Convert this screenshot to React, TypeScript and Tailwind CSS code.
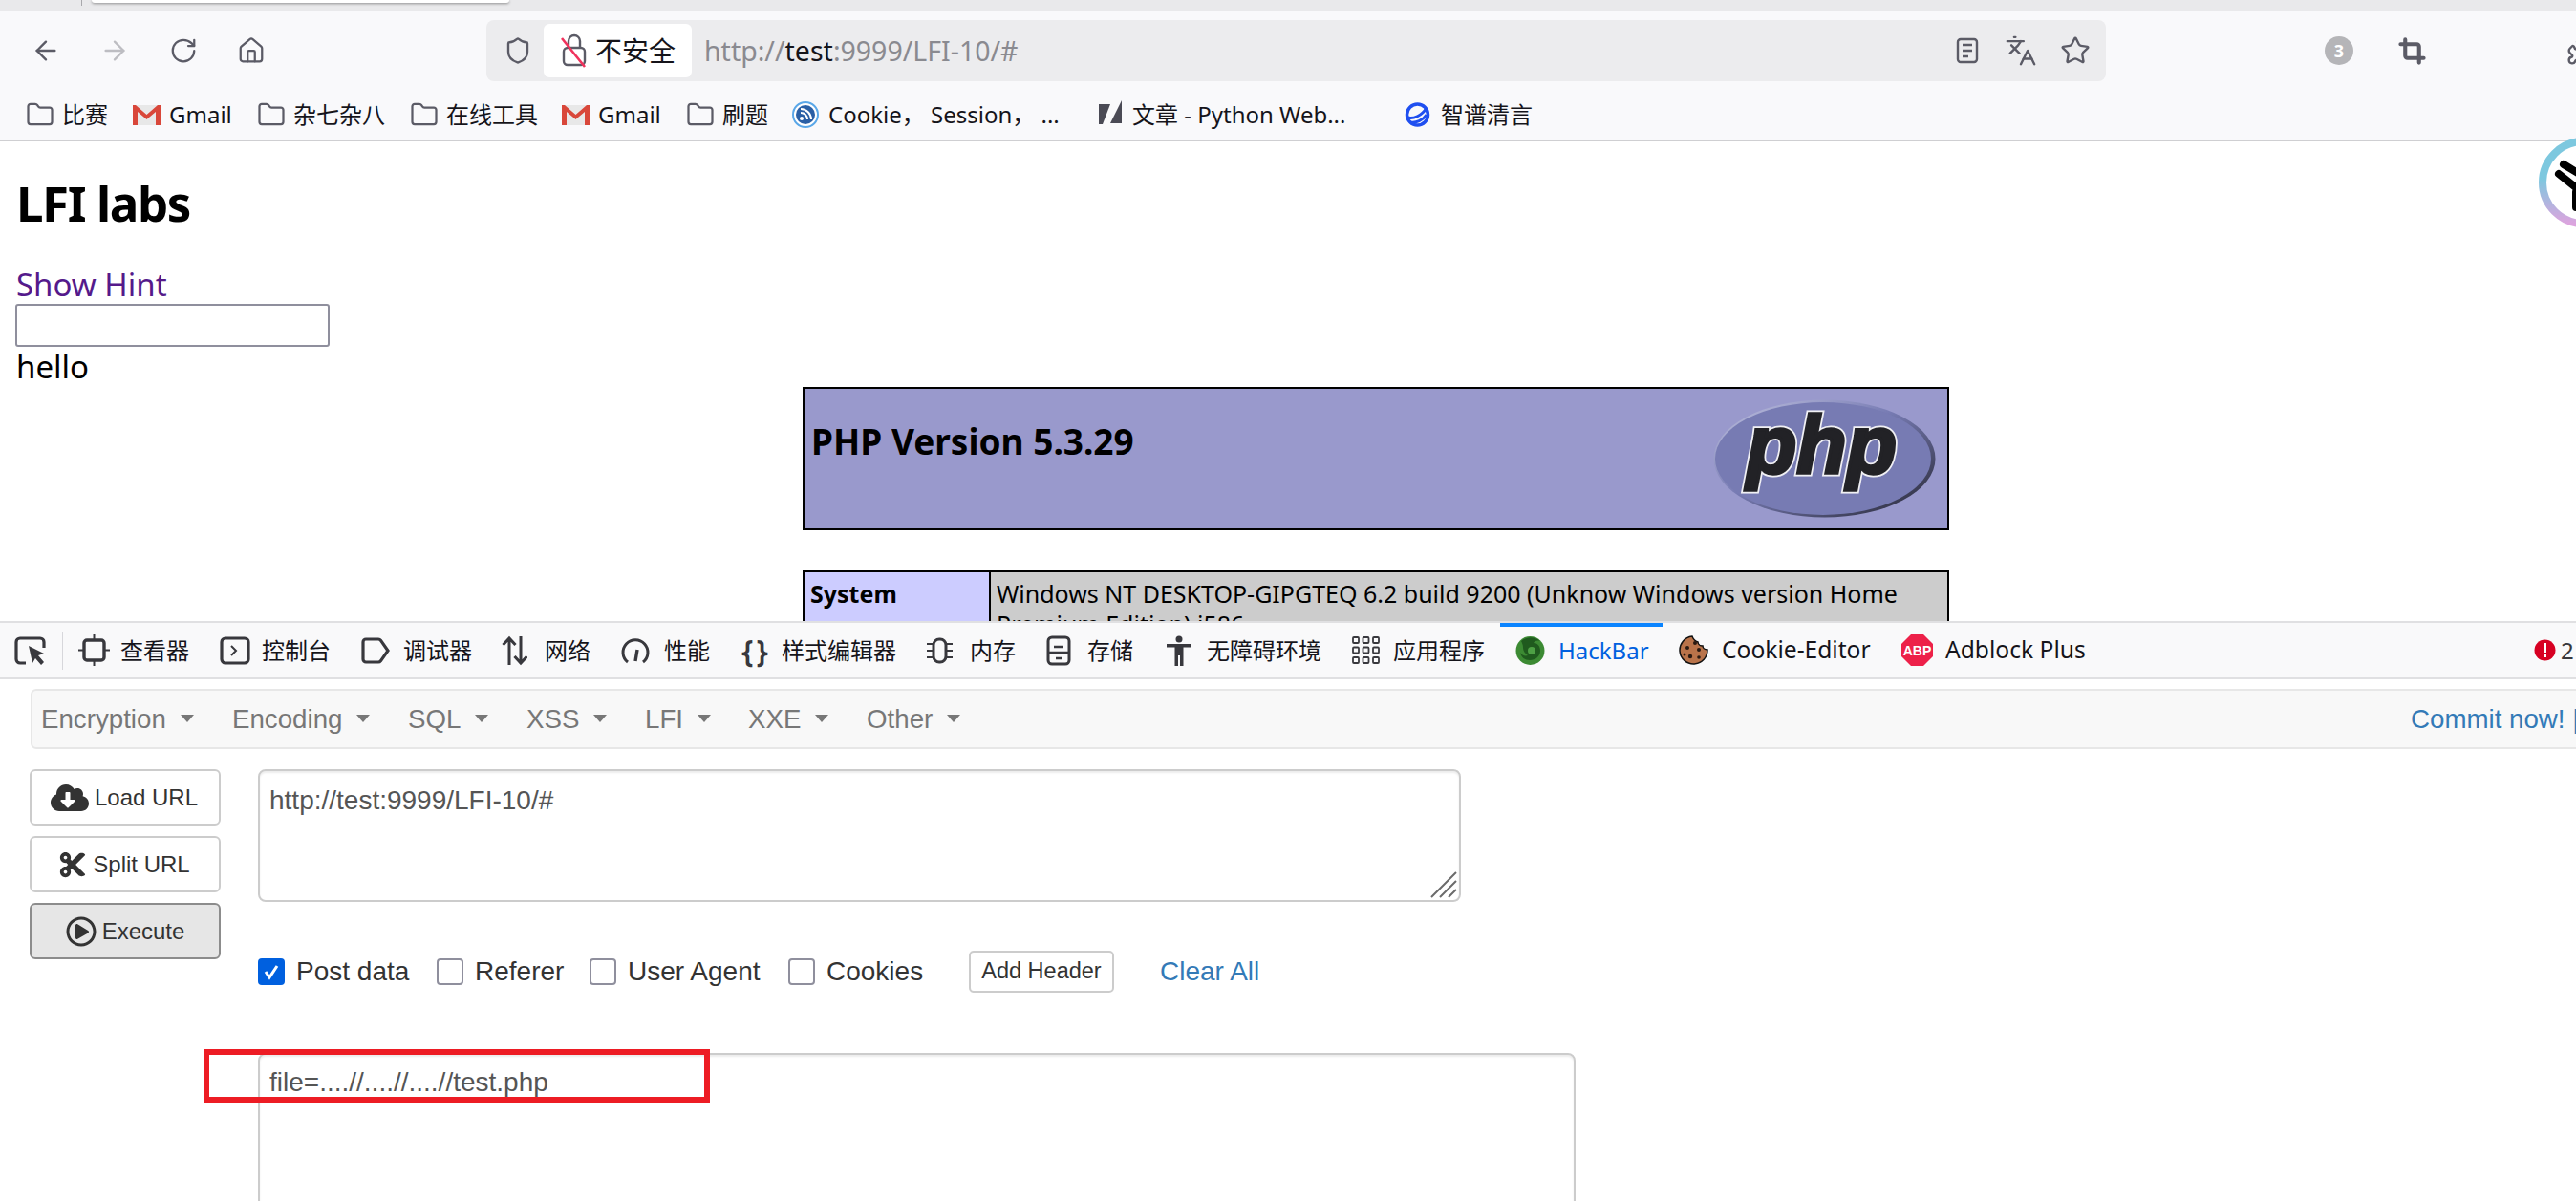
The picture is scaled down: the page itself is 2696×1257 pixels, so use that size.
import type { ReactNode } from "react";
import { ArrowLeft, ArrowRight, RotateCw, House, Shield, Star, Languages, Puzzle, Crop, Folder } from "lucide-react";
import { FaCloudDownloadAlt, FaCut, FaRegPlayCircle } from "react-icons/fa";

// ─── Small drawings ───────────────────────────────────────

function GmailIcon() {
  return (
    <svg width="31" height="24" viewBox="0 0 31 24" className="shrink-0">
      <rect x="1" y="2" width="29" height="21" fill="#e8e8e8" />
      <path d="M1 23V2h3l11.5 10L27 2h3v21h-5V9l-9.5 8L6 9v14z" fill="#d9473a" />
    </svg>
  );
}

function RssIcon() {
  return (
    <svg width="28" height="32" viewBox="0 0 28 32" className="shrink-0">
      <circle cx="14" cy="16" r="13" fill="#fff" stroke="#5aa7e8" strokeWidth="2" />
      <circle cx="14" cy="16" r="10" fill="#2a5fa5" />
      <circle cx="10" cy="20" r="2" fill="#fff" />
      <path d="M9 14a7 7 0 0 1 7 7M9 10a11 11 0 0 1 11 11" fill="none" stroke="#fff" strokeWidth="2" />
    </svg>
  );
}

function ArticleIcon() {
  return (
    <svg width="26" height="32" viewBox="0 0 26 32" className="shrink-0">
      <path d="M1 5h12L5 26H1z" fill="#4a4a55" />
      <path d="M25 1v24H13z" fill="#4a4a55" />
    </svg>
  );
}

function ZhipuIcon() {
  return (
    <svg width="27" height="26" viewBox="0 0 27 26" className="shrink-0">
      <circle cx="13.5" cy="13" r="11" fill="none" stroke="#1f4ff0" strokeWidth="3.5" />
      <path d="M3 16c6 2 15-2 20-10M6 21c6 1 13-2 17-8" fill="none" stroke="#1f4ff0" strokeWidth="3" />
    </svg>
  );
}

function SlashedLock() {
  return (
    <svg width="30" height="36" viewBox="0 0 30 36" fill="none" className="shrink-0">
      <path d="M9 15V8a6 6 0 0 1 12 0v7" stroke="#5b5b66" strokeWidth="2.4" />
      <rect x="4" y="15" width="22" height="18" rx="4" stroke="#5b5b66" strokeWidth="2.4" />
      <path d="M2 5l24 30" stroke="#f0325c" strokeWidth="2.6" />
    </svg>
  );
}

function ReaderIcon() {
  return (
    <svg width="24" height="28" viewBox="0 0 24 28" fill="none" className="shrink-0">
      <rect x="2" y="2" width="20" height="24" rx="3" stroke="#5b5b66" strokeWidth="2.4" />
      <path d="M7 8h10M7 14h10M7 20h6" stroke="#5b5b66" strokeWidth="2.4" />
    </svg>
  );
}

function PhpLogo() {
  const word = {
    x: 35,
    y: 77,
    textLength: 157,
    lengthAdjust: "spacingAndGlyphs" as const,
    fontFamily: "Liberation Sans, sans-serif",
    fontWeight: 700,
    fontStyle: "italic",
    fontSize: 86,
  };
  return (
    <svg width="233" height="124" viewBox="0 0 233 124" className="shrink-0">
      <defs>
        <linearGradient id="phpEdge" x1="0" y1="0" x2="1" y2="1">
          <stop offset="0" stopColor="#c4c6e2" />
          <stop offset="0.45" stopColor="#777bb3" />
          <stop offset="1" stopColor="#23232e" />
        </linearGradient>
      </defs>
      <ellipse cx="116.5" cy="62" rx="116" ry="61.5" fill="url(#phpEdge)" />
      <ellipse cx="115" cy="62" rx="113" ry="59" fill="#777bb3" />
      {/* white halo first, the heavy dark word on top */}
      <text {...word} fill="#f0f0f4" stroke="#f0f0f4" strokeWidth="7">
        php
      </text>
      <text {...word} fill="#222226" stroke="#222226" strokeWidth="3.5">
        php
      </text>
    </svg>
  );
}

function InspectorIcon() {
  return (
    <svg width="33" height="33" viewBox="0 0 33 33" fill="none" stroke="#38383d">
      <rect x="6" y="6" width="21" height="21" rx="3" strokeWidth="3.4" />
      <path d="M16.5 0v6M16.5 27v6M0 16.5h6M27 16.5h6" strokeWidth="2" />
    </svg>
  );
}

function ConsoleIcon() {
  return (
    <svg width="32" height="30" viewBox="0 0 32 30" fill="none" stroke="#38383d">
      <rect x="2" y="2" width="28" height="26" rx="4" strokeWidth="3.2" />
      <path d="M12 10l5 5-5 5" strokeWidth="2" />
    </svg>
  );
}

function DebuggerIcon() {
  return (
    <svg width="30" height="28" viewBox="0 0 30 28" fill="none" stroke="#38383d">
      <path d="M5 2h13a3 3 0 0 1 2.4 1.2L28 14l-7.6 10.8A3 3 0 0 1 18 26H5a3 3 0 0 1-3-3V5a3 3 0 0 1 3-3z" strokeWidth="3.2" />
    </svg>
  );
}

function NetworkIcon() {
  return (
    <svg width="27" height="32" viewBox="0 0 27 32" fill="none" stroke="#38383d" strokeWidth="3">
      <path d="M8 31V3M1.5 10L8 3l6.500 7" />
      <path d="M20 1v28M13.500 22l6.500 7 6.500-7" />
    </svg>
  );
}

function PerformanceIcon() {
  return (
    <svg width="30" height="30" viewBox="0 0 30 30" fill="none" stroke="#38383d">
      <path d="M7 27A13 13 0 1 1 23 27" strokeWidth="3" />
      <path d="M15 26l2-12" strokeWidth="3.400" />
    </svg>
  );
}

function MemoryIcon() {
  return (
    <svg width="27" height="30" viewBox="0 0 27 30" fill="none" stroke="#38383d">
      <rect x="7" y="3" width="13" height="24" rx="6" strokeWidth="3" />
      <path d="M0 8h6M0 15h6M0 22h6M21 8h6M21 15h6M21 22h6" strokeWidth="2" />
    </svg>
  );
}

function StorageIcon() {
  return (
    <svg width="26" height="32" viewBox="0 0 26 32" fill="none" stroke="#38383d">
      <rect x="2" y="2" width="22" height="28" rx="4" strokeWidth="3" />
      <path d="M8 12h10M2 18h22M10 24h6" strokeWidth="2.600" />
    </svg>
  );
}

function AccessibilityIcon() {
  return (
    <svg width="28" height="32" viewBox="0 0 28 32" fill="#38383d">
      <circle cx="14" cy="4" r="3.500" />
      <path d="M1 9h26v3.500h-8.500V32h-3.500v-11h-2v11H9.500V12.500H1z" />
    </svg>
  );
}

function AppsIcon() {
  const cells = [0, 1, 2, 3, 4, 5, 6, 7, 8];
  return (
    <svg width="29" height="29" viewBox="0 0 29 29" fill="none" stroke="#38383d" strokeWidth="1.800">
      {cells.map((i) => (
        <rect key={i} x={1 + (i % 3) * 10.500} y={1 + Math.floor(i / 3) * 10.500} width="6" height="6" rx="1" />
      ))}
    </svg>
  );
}

function HackBarIcon() {
  return (
    <svg width="31" height="32" viewBox="0 0 31 32">
      <circle cx="15.500" cy="16" r="15" fill="#3c8a33" />
      <path d="M6 6c6-5 14-5 20 0-4-1-6 0-7 2 4 0 7 3 7 8 0 6-5 10-11 10-5 0-9-3-10-8 2 3 5 4 8 3-3-2-5-5-5-8 0-3-1-5-2-7z" fill="#1f5a1e" />
      <circle cx="17" cy="16" r="4" fill="#4da044" />
    </svg>
  );
}

function CookieIcon() {
  return (
    <svg width="33" height="32" viewBox="0 0 33 32">
      <path d="M15 2a14.500 14.500 0 1 0 16 14c-3 0-5-2-5-4-3 0-5-2-5-4-3-1-5-3-6-6z" fill="#b9734a" stroke="#111" strokeWidth="1.500" />
      <circle cx="18" cy="9" r="2" fill="#2a1a12" />
      <circle cx="10" cy="14" r="2" fill="#2a1a12" />
      <circle cx="22" cy="16" r="2" fill="#2a1a12" />
      <circle cx="13" cy="23" r="2.200" fill="#2a1a12" />
      <circle cx="22" cy="24" r="1.800" fill="#2a1a12" />
      <circle cx="7" cy="21" r="1.500" fill="#2a1a12" />
    </svg>
  );
}

function AbpIcon() {
  return (
    <svg width="33" height="33" viewBox="0 0 33 33">
      <path d="M10 0h13l10 10v13L23 33H10L0 23V10z" fill="#ed2149" />
      <text x="16.500" y="22" textAnchor="middle" fontFamily="Liberation Sans, sans-serif" fontWeight="700" fontSize="14" fill="#fff">
        ABP
      </text>
    </svg>
  );
}

function ResizeHandle() {
  return (
    <svg width="30" height="30" viewBox="0 0 30 30" className="absolute right-[3px] bottom-[3px]" stroke="#6b6b6b" strokeWidth="2">
      <path d="M2 28L28 2M11 28L28 11M20 28l8-8" />
    </svg>
  );
}

// ─── Browser chrome ───────────────────────────────────────

function Bookmark({
  icon,
  label,
  width,
  gap,
  iconGap = "ml-[8px]",
}: {
  icon: ReactNode;
  label: string;
  width: string;
  gap: string;
  iconGap?: string;
}) {
  return (
    <div className={`flex shrink-0 items-center ${gap}`}>
      {icon}
      <span className={`whitespace-nowrap text-[24px] text-[#15141a] ${iconGap} ${width}`}>{label}</span>
    </div>
  );
}

const folder = <Folder size={30} strokeWidth={1.8} color="#5b5b66" className="shrink-0" />;

function BrowserChrome() {
  return (
    <div className="shrink-0 font-['Noto_Sans','Noto_Sans_CJK_SC',sans-serif]">
      <div className="flex h-[11px] bg-[#e9e9eb]">
        <div className="ml-[85px] h-[6px] w-[1px] bg-[#a8a8ac]" />
        <div className="ml-[10px] h-[3px] w-[437px] rounded-b-[4px] bg-white shadow-[0_1px_3px_rgba(0,0,0,0.4)]" />
      </div>

      <div className="flex h-[84px] items-center bg-[#f9f9fb]">
        <ArrowLeft size={32} strokeWidth={1.8} color="#5b5b66" className="ml-[32px] shrink-0" />
        <ArrowRight size={32} strokeWidth={1.8} color="#bdbdc2" className="ml-[40px] shrink-0" />
        <RotateCw size={30} strokeWidth={1.8} color="#5b5b66" className="ml-[41px] shrink-0" />
        <House size={30} strokeWidth={1.8} color="#5b5b66" className="ml-[41px] shrink-0" />
        <div className="ml-[231px] flex h-[64px] w-[1695px] shrink-0 items-center rounded-[8px] bg-[#ececee]">
          <Shield size={30} strokeWidth={1.9} color="#5b5b66" className="ml-[18px] shrink-0" />
          <div className="ml-[12px] flex h-[56px] w-[155px] shrink-0 items-center rounded-[6px] bg-white pl-[17px]">
            <SlashedLock />
            <span className="ml-[7px] whitespace-nowrap text-[28px] text-[#15141a]">不安全</span>
          </div>
          <span className="ml-[13px] whitespace-nowrap text-[28.5px] text-[#8a8a90]">
            http://<span className="text-[#15141a]">test</span>:9999/LFI-10/#
          </span>
          <div className="ml-auto flex items-center">
            <ReaderIcon />
            <Languages size={34} strokeWidth={1.7} color="#5b5b66" className="ml-[27px] shrink-0" />
            <Star size={32} strokeWidth={1.8} color="#5b5b66" className="ml-[24px] mr-[16px] shrink-0" />
          </div>
        </div>
        <div className="ml-[229px] flex h-[30px] w-[30px] shrink-0 items-center justify-center rounded-full bg-[#b5b5b8] text-[18px] font-bold text-white">
          3
        </div>
        <Crop size={29} strokeWidth={3.4} color="#5b5b66" className="ml-[47px] shrink-0" />
        <Puzzle size={32} strokeWidth={1.8} color="#5b5b66" className="ml-[147px] shrink-0" />
      </div>

      <div className="flex h-[53px] items-center border-b border-[#cfcfd2] bg-[#f9f9fb] pb-[3px] pl-[27px]">
        <Bookmark icon={folder} label="比赛" width="w-[48px]" gap="mr-[25px]" />
        <Bookmark icon={<GmailIcon />} label="Gmail" width="w-[66px]" gap="mr-[26px]" />
        <Bookmark icon={folder} label="杂七杂八" width="w-[97px]" gap="mr-[25px]" />
        <Bookmark icon={folder} label="在线工具" width="w-[97px]" gap="mr-[23px]" />
        <Bookmark icon={<GmailIcon />} label="Gmail" width="w-[66px]" gap="mr-[26px]" />
        <Bookmark icon={folder} label="刷题" width="w-[48px]" gap="mr-[25px]" />
        <Bookmark icon={<RssIcon />} label="Cookie， Session， ..." width="w-[245px]" iconGap="ml-[10px]" gap="mr-[37px]" />
        <Bookmark icon={<ArticleIcon />} label="文章 - Python Web..." width="w-[234px]" iconGap="ml-[10px]" gap="mr-[51px]" />
        <Bookmark icon={<ZhipuIcon />} label="智谱清言" width="w-[97px]" iconGap="ml-[11px]" gap="" />
      </div>
    </div>
  );
}

// ─── Page under test ──────────────────────────────────────

function LabPage() {
  return (
    <div className="relative h-[502px] shrink-0 overflow-hidden bg-white pl-[16px] font-['Noto_Sans',sans-serif] text-black">
      <h1 className="mt-[36px] h-[56px] pl-[1px] text-[51px] leading-[56px] font-bold tracking-[-1.4px]">LFI labs</h1>
      <a href="#" className="mt-[38px] block h-[40px] pl-[1px] text-[33px] leading-[40px] text-[#551a8b]">
        Show Hint
      </a>
      <input className="block h-[45px] w-[329px] rounded-[3px] border-2 border-[#8f8f9d] bg-white" />
      <div className="h-[42px] pl-[1px] text-[33px] leading-[42px]">hello</div>

      <div className="ml-[824px] flex h-[150px] w-[1200px] items-center justify-between border-2 border-black bg-[#9999cc] pr-[12px] pl-[7px]">
        <h2 className="mb-[36px] text-[37px] leading-[38px] font-bold">PHP Version 5.3.29</h2>
        <PhpLogo />
      </div>

      <div className="mt-[42px] ml-[824px] flex h-[80px] w-[1200px] border-2 border-black text-[25px] leading-[32px]">
        <div className="w-[195px] shrink-0 border-r-2 border-black bg-[#ccccff] pt-[6px] pl-[6px] font-bold">System</div>
        <div className="flex-1 bg-[#cccccc] pt-[6px] pl-[6px]">
          Windows NT DESKTOP-GIPGTEQ 6.2 build 9200 (Unknow Windows version Home Premium Edition) i586
        </div>
      </div>
    </div>
  );
}

// ─── Devtools tabs ────────────────────────────────────────

function DevTab({ icon, label, className, textClass }: { icon: ReactNode; label: string; className: string; textClass?: string }) {
  return (
    <div className={`flex shrink-0 items-center ${className}`}>
      {icon}
      <span className={`whitespace-nowrap ${textClass ?? "text-[24px] text-[#15141a]"}`}>{label}</span>
    </div>
  );
}

function DevToolbar() {
  return (
    <div className="flex h-[61px] shrink-0 items-center border-y-2 border-[#e0e0e2] bg-[#f9f9fa] font-['Noto_Sans','Noto_Sans_CJK_SC',sans-serif]">
      <svg width="33" height="30" viewBox="0 0 33 30" fill="none" className="ml-[15px] shrink-0">
        <path d="M12 28H6a4 4 0 0 1-4-4V6a4 4 0 0 1 4-4h21a4 4 0 0 1 4 4v6" stroke="#38383d" strokeWidth="3.200" />
        <path d="M15 10l16 8-6 2 6 7-3 3-6-7-3 5z" fill="#38383d" />
      </svg>
      <div className="ml-[17px] h-[40px] w-[1px] bg-[#d7d7db]" />
      <DevTab icon={<InspectorIcon />} label="查看器" className="ml-[16px] w-[148px] gap-[11px]" />
      <DevTab icon={<ConsoleIcon />} label="控制台" className="w-[148px] gap-[12px]" />
      <DevTab icon={<DebuggerIcon />} label="调试器" className="w-[147px] gap-[14px]" />
      <DevTab icon={<NetworkIcon />} label="网络" className="w-[125px] gap-[18px]" />
      <DevTab icon={<PerformanceIcon />} label="性能" className="w-[126px] gap-[15px]" />
      <DevTab
        icon={<span className="w-[29px] text-[32px] leading-none font-semibold tracking-[3px] text-[#38383d]">{"{}"}</span>}
        label="样式编辑器"
        className="w-[194px] gap-[13px]"
      />
      <DevTab icon={<MemoryIcon />} label="内存" className="w-[125px] gap-[18px]" />
      <DevTab icon={<StorageIcon />} label="存储" className="w-[125px] gap-[17px]" />
      <DevTab icon={<AccessibilityIcon />} label="无障碍环境" className="w-[195px] gap-[15px]" />
      <DevTab icon={<AppsIcon />} label="应用程序" className="w-[155px] gap-[14px]" />
      <DevTab
        icon={<HackBarIcon />}
        label="HackBar"
        textClass="text-[24px] text-[#0060df]"
        className="h-full w-[170px] gap-[14px] border-t-4 border-[#0a84ff] pb-[4px] pl-[16px]"
      />
      <DevTab
        icon={<CookieIcon />}
        label="Cookie-Editor"
        textClass="text-[24.6px] text-[#15141a]"
        className="w-[250px] gap-[13px] pl-[16px]"
      />
      <DevTab icon={<AbpIcon />} label="Adblock Plus" textClass="text-[24.6px] text-[#15141a]" className="w-[662px] gap-[13px]" />
      <svg width="23" height="23" viewBox="0 0 23 23" className="shrink-0">
        <circle cx="11.500" cy="11.500" r="11" fill="#d70022" />
        <path d="M10 4h3v10h-3zM10 16h3v3h-3z" fill="#fff" />
      </svg>
      <span className="ml-[5px] text-[24px] text-[#38383d]">2</span>
    </div>
  );
}

// ─── HackBar panel ────────────────────────────────────────

const MENU = [
  { label: "Encryption", width: "w-[200px]" },
  { label: "Encoding", width: "w-[184px]" },
  { label: "SQL", width: "w-[124px]" },
  { label: "XSS", width: "w-[124px]" },
  { label: "LFI", width: "w-[108px]" },
  { label: "XXE", width: "w-[124px]" },
  { label: "Other", width: "w-[120px]" },
];

function SideButton({ icon, label, active }: { icon: ReactNode; label: string; active?: boolean }) {
  return (
    <button
      className={
        active
          ? "flex h-[59px] w-[200px] items-center justify-center gap-[6px] rounded-[6px] border-2 border-[#8c8c8c] bg-[#e6e6e6] text-[24px] text-[#333]"
          : "flex h-[59px] w-[200px] items-center justify-center gap-[6px] rounded-[6px] border-2 border-[#cccccc] bg-white pr-[2px] text-[24px] text-[#333]"
      }
    >
      {icon}
      {label}
    </button>
  );
}

function Check({ label, checked, className }: { label: string; checked?: boolean; className: string }) {
  return (
    <label className={`flex shrink-0 items-center gap-[12px] ${className}`}>
      {checked ? (
        <span className="flex h-[28px] w-[28px] items-center justify-center rounded-[4px] bg-[#0060df]">
          <svg width="20" height="20" viewBox="0 0 20 20" fill="none" stroke="#fff" strokeWidth="3">
            <path d="M4 10l4 6 8-12" />
          </svg>
        </span>
      ) : (
        <span className="h-[28px] w-[28px] rounded-[4px] border-2 border-[#8f8f9d] bg-white" />
      )}
      <span className="text-[28px] text-[#333]">{label}</span>
    </label>
  );
}

function HackBarPanel() {
  return (
    <div className="min-h-0 flex-1 overflow-hidden bg-white font-['Liberation_Sans',sans-serif]">
      <div className="mt-[10px] ml-[32px] flex h-[63px] w-[2700px] items-center rounded-[6px] border-2 border-[#e7e7e7] bg-[#f8f8f8] pl-[9px] text-[27.7px] text-[#777]">
        {MENU.map((item) => (
          <div key={item.label} className={`flex shrink-0 items-center gap-[15px] ${item.width}`}>
            {item.label}
            <span className="h-0 w-0 border-x-[7px] border-t-[8px] border-x-transparent border-t-[#777]" />
          </div>
        ))}
        <a href="#" className="ml-[1496px] shrink-0 whitespace-nowrap text-[#337ab7]">
          Commit now! | Donate
        </a>
      </div>

      <div className="mt-[21px] ml-[31px] flex">
        <div className="flex w-[200px] shrink-0 flex-col gap-[11px]">
          <SideButton icon={<FaCloudDownloadAlt size={40} color="#333" />} label="Load URL" />
          <SideButton icon={<FaCut size={30} color="#333" />} label="Split URL" />
          <SideButton icon={<FaRegPlayCircle size={32} color="#333" />} label="Execute" active />
        </div>

        <div className="ml-[39px] flex-1">
          <div className="relative h-[139px] w-[1259px]">
            <textarea
              readOnly
              defaultValue="http://test:9999/LFI-10/#"
              className="block h-full w-full resize-none rounded-[8px] border-2 border-[#cccccc] bg-white px-[10px] py-[13px] text-[28px] leading-[36px] text-[#555] shadow-[inset_0_2px_2px_rgba(0,0,0,0.075)] outline-none"
            />
            <ResizeHandle />
          </div>

          <div className="mt-[51px] flex h-[44px] items-center">
            <Check label="Post data" checked className="w-[187px]" />
            <Check label="Referer" className="w-[160px]" />
            <Check label="User Agent" className="w-[208px]" />
            <Check label="Cookies" className="w-[189px]" />
            <button className="h-[44px] w-[152px] rounded-[5px] border-2 border-[#cccccc] bg-white text-[23.5px] text-[#333]">
              Add Header
            </button>
            <a href="#" className="ml-[48px] text-[28px] text-[#337ab7]">
              Clear All
            </a>
          </div>

          <textarea
            readOnly
            defaultValue="file=....//....//....//test.php"
            className="mt-[63px] block h-[300px] w-[1379px] resize-none rounded-[8px] border-2 border-[#cccccc] bg-white px-[10px] py-[11px] text-[28px] leading-[36px] text-[#555] shadow-[inset_0_2px_2px_rgba(0,0,0,0.075)] outline-none"
          />
        </div>
      </div>
    </div>
  );
}

// ─── App ──────────────────────────────────────────────────

export default function App() {
  return (
    <div className="relative flex h-[1257px] w-[2696px] flex-col overflow-hidden bg-white">
      <BrowserChrome />
      <LabPage />
      <DevToolbar />
      <HackBarPanel />

      {/* floating extension bubble, cut off by the window edge */}
      <svg width="96" height="96" viewBox="0 0 96 96" fill="none" className="absolute top-[143px] right-[-56px]">
        <defs>
          <linearGradient id="bubbleRing" x1="0" y1="0" x2="0" y2="1">
            <stop offset="0.45" stopColor="#7dc8df" />
            <stop offset="1" stopColor="#dca4de" />
          </linearGradient>
        </defs>
        <circle cx="48" cy="48" r="43" fill="#fff" stroke="url(#bubbleRing)" strokeWidth="8" />
        <path d="M27 29l20 12M22 39l25 20M40 58v16" stroke="#000" strokeWidth="8" strokeLinecap="round" />
      </svg>

      {/* red annotation around the post data */}
      <div className="absolute top-[1098px] left-[213px] h-[56px] w-[530px] border-[6px] border-[#ed1c24]" />
    </div>
  );
}
